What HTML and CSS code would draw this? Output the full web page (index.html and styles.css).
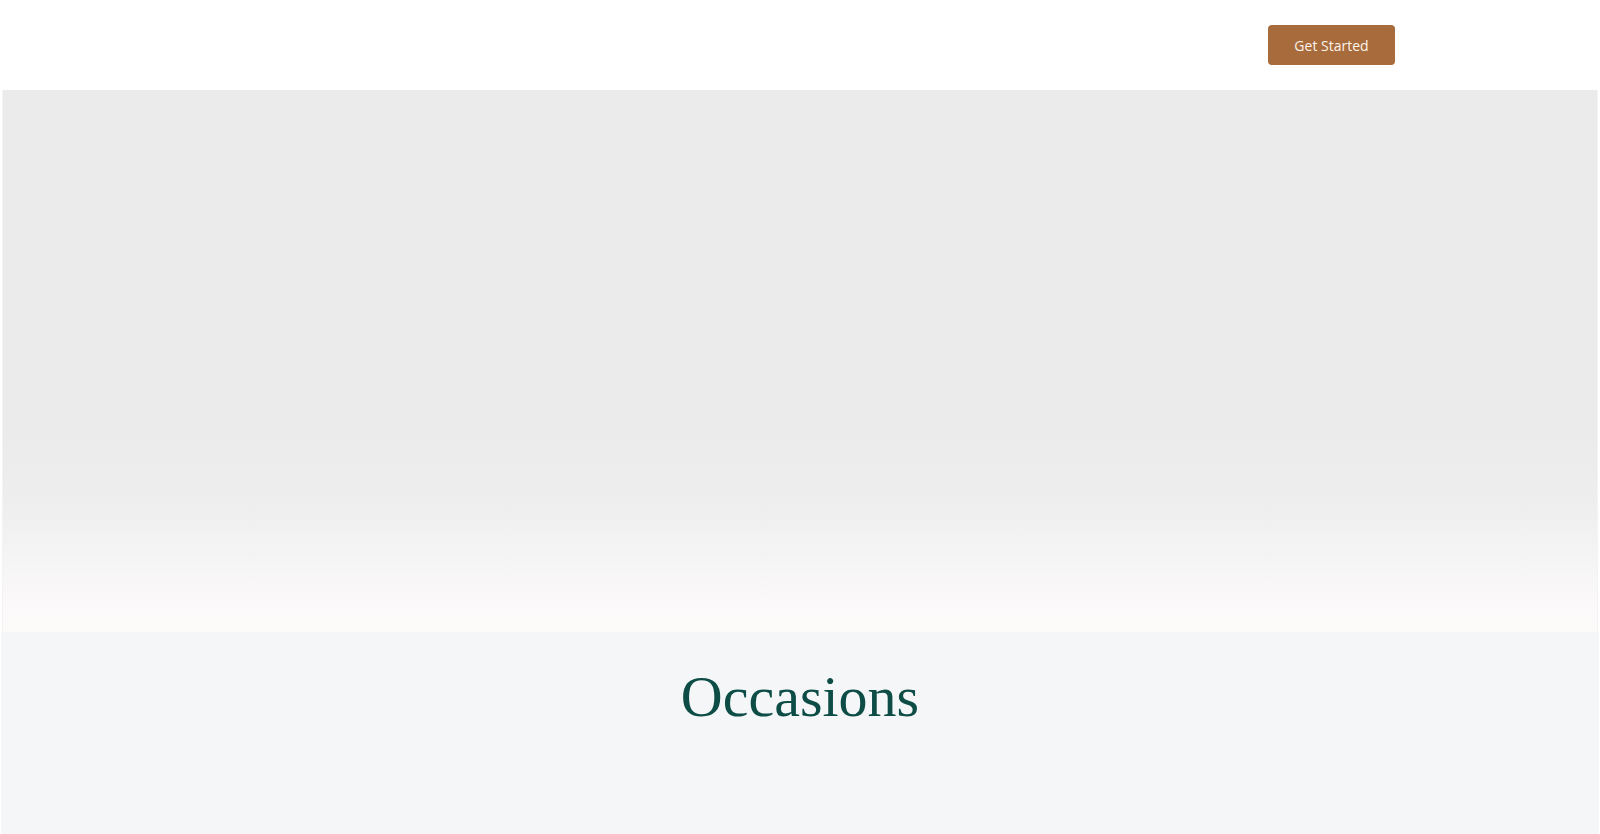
FILE: index.html
```html
<!DOCTYPE html>
<html lang="en">
<head>
<meta charset="utf-8">
<title>Occasions</title>
<link rel="stylesheet" href="styles.css">
</head>
<body>
<header class="site-header">
  <div class="header-inner">
    <a class="btn-start" href="#">Get Started</a>
  </div>
</header>
<section class="hero"></section>
<section class="occasions">
  <h2 class="occasions-title">Occasions</h2>
</section>
</body>
</html>
```
FILE: styles.css
```css
* { box-sizing: border-box; }
html, body { margin: 0; padding: 0; }
body {
  background: #ffffff;
  font-family: "Open Sans", "Liberation Sans", sans-serif;
  overflow: hidden;
  height: 834px;
}
.site-header {
  height: 90px;
  background: #ffffff;
}
.header-inner {
  display: flex;
  justify-content: flex-end;
  padding: 25px 205px 0 0;
}
.btn-start {
  display: flex;
  align-items: center;
  justify-content: center;
  width: 127px;
  height: 40px;
  background: #a86b3c;
  color: #fbf3ea;
  border-radius: 4px;
  font-size: 14px;
  text-decoration: none;
}
.hero {
  height: 542px;
  margin: 0 2px;
  background: linear-gradient(to bottom, #ebebeb 0%, #ebebeb 64%, #efeeee 76%, #f5f4f4 86%, #fbf9f9 95%, #fdfafa 100%);
  border-left: 1px solid #f3f3f3;
  border-right: 1px solid #f3f3f3;
}
.occasions {
  height: 202px;
  margin: 0 1px;
  background: #f4f6f8;
  padding-top: 30px;
}
.occasions-title {
  margin: 0;
  text-align: center;
  font-family: "Liberation Serif", "DejaVu Serif", serif;
  font-weight: 400;
  font-size: 58px;
  line-height: 70px;
  color: #0e4d46;
}
```
